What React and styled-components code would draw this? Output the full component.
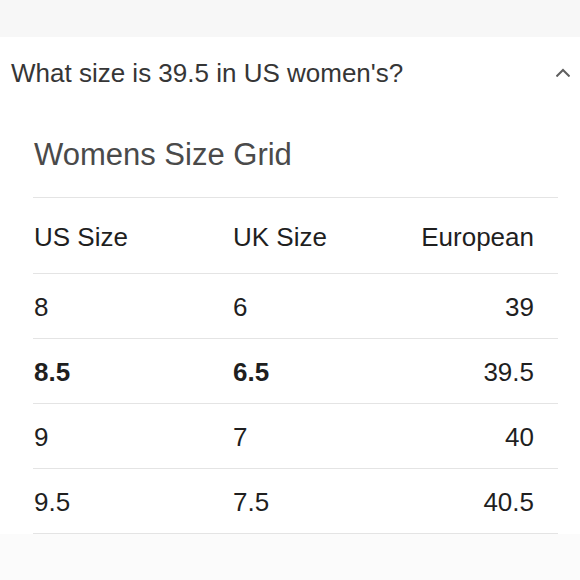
import styled, { createGlobalStyle } from "styled-components";

const GlobalStyle = createGlobalStyle`
  html, body {
    margin: 0;
    padding: 0;
    background: #ffffff;
  }
  body {
    font-family: "Liberation Sans", Arial, Helvetica, sans-serif;
  }
`;

const Page = styled.div`
  width: 580px;
  height: 580px;
  display: flex;
  flex-direction: column;
  background: #ffffff;
  overflow: hidden;
`;

const TopBand = styled.div`
  height: 37px;
  flex-shrink: 0;
  background: #f7f7f7;
`;

const QuestionRow = styled.div`
  height: 70px;
  display: flex;
  align-items: center;
  justify-content: space-between;
  padding: 0 10px 0 11px;
  .question {
    margin: 0;
    font-size: 26px;
    font-weight: 400;
    color: #363636;
    line-height: 30px;
    padding-top: 1px;
  }
`;

const Panel = styled.div`
  padding: 0 22px 0 33px;
`;

const Title = styled.h2`
  margin: 0;
  padding: 31px 0 25px 1px;
  font-size: 31px;
  line-height: 34px;
  font-weight: 400;
  color: #4a4a4a;
  border-bottom: 1px solid #e4e4e4;
`;

const Row = styled.div`
  display: grid;
  grid-template-columns: 199px 1fr auto;
  align-items: center;
  padding: 2px 24px 0 1px;
  box-sizing: border-box;
  height: ${(props) => (props.$head ? "76px" : "65px")};
  border-bottom: 1px solid #e4e4e4;
  font-size: 26px;
  line-height: 28px;
  color: #1f1f1f;
  span {
    font-weight: ${(props) => (props.$bold ? 700 : 400)};
  }
  span:last-child {
    text-align: right;
    font-weight: 400;
  }
`;

const Footer = styled.div`
  flex: 1;
  background: #fbfbfb;
`;

function Chevron() {
  return (
    <svg width="14" height="9" viewBox="0 0 14 9" fill="none">
      <polyline
        points="1.2 7.8 7 2 12.8 7.8"
        stroke="#5f5f5f"
        strokeWidth="2"
        strokeLinecap="square"
      />
    </svg>
  );
}

const sizes = [
  { us: "8", uk: "6", eu: "39" },
  { us: "8.5", uk: "6.5", eu: "39.5", bold: true },
  { us: "9", uk: "7", eu: "40" },
  { us: "9.5", uk: "7.5", eu: "40.5" },
];

export default function App() {
  return (
    <>
      <GlobalStyle />
      <Page>
        <TopBand />
        <QuestionRow>
          <p className="question">What size is 39.5 in US women's?</p>
          <Chevron />
        </QuestionRow>
        <Panel>
          <Title>Womens Size Grid</Title>
          <Row $head>
            <span>US Size</span>
            <span>UK Size</span>
            <span>European</span>
          </Row>
          {sizes.map((item) => (
            <Row key={item.us} $bold={item.bold}>
              <span>{item.us}</span>
              <span>{item.uk}</span>
              <span>{item.eu}</span>
            </Row>
          ))}
        </Panel>
        <Footer />
      </Page>
    </>
  );
}
